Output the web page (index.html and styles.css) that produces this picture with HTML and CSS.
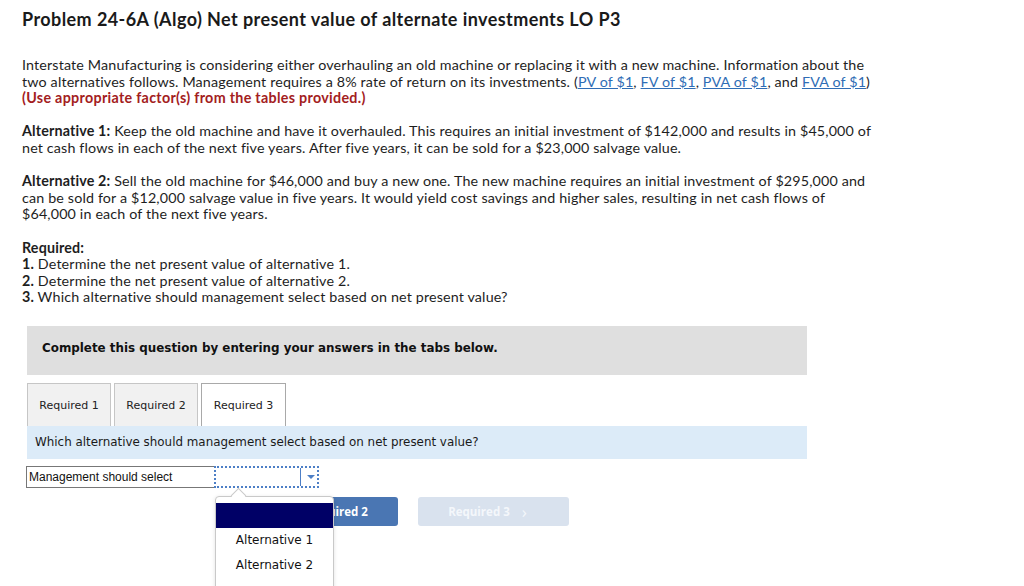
FILE: index.html
```html
<!DOCTYPE html>
<html>
<head>
<meta charset="utf-8">
<link rel="stylesheet" href="styles.css">
</head>
<body>
<div class="page">
  <h1 class="title">Problem 24-6A (Algo) Net present value of alternate investments LO P3</h1>
  <p class="para">Interstate Manufacturing is considering either overhauling an old machine or replacing it with a new machine. Information about the<br>two alternatives follows. Management requires a 8% rate of return on its investments. (<a class="lnk">PV of $1</a>, <a class="lnk">FV of $1</a>, <a class="lnk">PVA of $1</a>, and <a class="lnk">FVA of $1</a>)<br><span class="red">(Use appropriate factor(s) from the tables provided.)</span></p>
  <p class="para"><b>Alternative 1:</b> Keep the old machine and have it overhauled. This requires an initial investment of $142,000 and results in $45,000 of<br>net cash flows in each of the next five years. After five years, it can be sold for a $23,000 salvage value.</p>
  <p class="para"><b>Alternative 2:</b> Sell the old machine for $46,000 and buy a new one. The new machine requires an initial investment of $295,000 and<br>can be sold for a $12,000 salvage value in five years. It would yield cost savings and higher sales, resulting in net cash flows of<br>$64,000 in each of the next five years.</p>
  <p class="para"><b>Required:</b><br><b>1.</b> Determine the net present value of alternative 1.<br><b>2.</b> Determine the net present value of alternative 2.<br><b>3.</b> Which alternative should management select based on net present value?</p>

  <div class="panel">
    <div class="instr">Complete this question by entering your answers in the tabs below.</div>
    <div class="tabs">
      <div class="tab">Required 1</div>
      <div class="tab">Required 2</div>
      <div class="tab active">Required 3</div>
    </div>
    <div class="question">Which alternative should management select based on net present value?</div>
    <div class="selrow">
      <div class="label">Management should select</div>
      <div class="select"><span class="divider"></span><span class="arrow"></span></div>
    </div>
    <div class="navrow">
      <div class="btn prev"><span class="chev">&lsaquo;</span>Required 2</div>
      <div class="btn next">Required 3<span class="chev">&rsaquo;</span></div>
    </div>
    <div class="popup">
      <div class="notch"></div>
      <div class="opt selected">&nbsp;</div>
      <div class="opt">Alternative 1</div>
      <div class="opt">Alternative 2</div>
    </div>
  </div>
</div>
</body>
</html>
```

FILE: styles.css
```css
html, body {
  margin: 0;
  padding: 0;
  background: #ffffff;
}
.page {
  padding: 9px 0 0 22px;
  font-family: Lato, "Open Sans", sans-serif;
  color: #1e1e1e;
  overflow: hidden;
  height: 577px;
}
.title {
  margin: 0;
  font-size: 18px;
  letter-spacing: 0.42px;
  font-weight: 700;
  line-height: 20px;
  color: #1a1a1a;
}
.para {
  margin: 0 0 16.6px 0;
  font-size: 14.3px;
  letter-spacing: 0.15px;
  line-height: 16.6px;
  white-space: nowrap;
}
.title + .para {
  margin-top: 28px;
}
.para b {
  font-weight: 700;
}
.lnk {
  color: #2f6db5;
  text-decoration: underline;
}
.red {
  color: #a3201d;
  font-weight: 700;
  letter-spacing: 0.3px;
}
.panel {
  position: relative;
  margin: 0 0 0 5px;
  width: 780px;
  padding-top: 3px;
}
.instr {
  background: #dfdfdf;
  height: 44px;
  padding: 0 0 5px 15px;
  display: flex;
  align-items: center;
  font-family: "DejaVu Sans", Verdana, sans-serif;
  font-size: 11.9px;
  font-weight: 700;
  color: #111;
}
.tabs {
  display: flex;
  gap: 3px;
  margin-top: 8px;
  height: 43px;
}
.tab {
  width: 82px;
  border: 1px solid #c6c6c6;
  border-bottom: none;
  background: #f1f1f1;
  display: flex;
  align-items: center;
  justify-content: center;
  font-family: "DejaVu Sans", Verdana, sans-serif;
  font-size: 11px;
  color: #222;
  padding-top: 2px;
}
.tab.active {
  width: 83px;
  background: #ffffff;
  border-color: #a9a9a9;
}
.question {
  background: #dcebf8;
  height: 33px;
  padding-left: 8px;
  display: flex;
  align-items: center;
  font-family: "DejaVu Sans", Verdana, sans-serif;
  font-size: 11.9px;
  color: #1a1a1a;
}
.selrow {
  display: flex;
  margin-top: 7px;
  margin-left: -1px;
  height: 22px;
}
.label {
  width: 185px;
  border: 1px solid #777;
  border-right: none;
  display: flex;
  align-items: center;
  padding-left: 2px;
  font-family: "Liberation Sans", Arial, sans-serif;
  font-size: 12px;
  color: #111;
}
.select {
  position: relative;
  width: 101px;
  height: 18px;
  border: 2px dotted #4d7fc6;
}
.divider {
  position: absolute;
  left: 84px;
  top: 0;
  width: 1px;
  height: 18px;
  background: #4d7fc6;
}
.arrow {
  position: absolute;
  left: 91px;
  top: 7px;
  width: 0;
  height: 0;
  border-left: 4px solid transparent;
  border-right: 4px solid transparent;
  border-top: 4px solid #4d7fc6;
}
.navrow {
  display: flex;
  gap: 20px;
  margin-top: 9px;
  margin-left: 220px;
}
.btn {
  height: 29px;
  width: 151px;
  border-radius: 3px;
  display: flex;
  align-items: center;
  justify-content: center;
  font-family: "Open Sans", Lato, sans-serif;
  font-size: 11.5px;
  font-weight: 700;
  color: #ffffff;
}
.btn.prev {
  background: #4a76b3;
}
.btn.next {
  background: #d9e2ee;
  color: #f4f7fb;
}
.chev {
  font-size: 17px;
  font-weight: 400;
  margin: 0 12px;
  line-height: 1;
}
.popup {
  position: absolute;
  left: 188px;
  top: 173px;
  width: 117px;
  height: 92px;
  background: #ffffff;
  border: 1px solid #c9c9c9;
  border-radius: 4px;
  box-shadow: 0 1px 4px rgba(0,0,0,0.12);
  padding-top: 6px;
}
.notch {
  position: absolute;
  left: 17px;
  top: -7px;
  width: 10px;
  height: 10px;
  background: #ffffff;
  border-left: 1px solid #c9c9c9;
  border-top: 1px solid #c9c9c9;
  transform: rotate(45deg);
}
.opt {
  position: relative;
  height: 25px;
  display: flex;
  align-items: center;
  justify-content: center;
  font-family: "DejaVu Sans", Verdana, sans-serif;
  font-size: 12px;
  color: #111;
}
.opt.selected {
  background: #000066;
  height: 25px;
}
```
